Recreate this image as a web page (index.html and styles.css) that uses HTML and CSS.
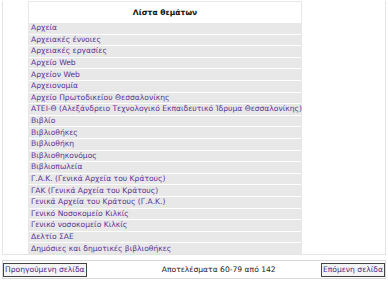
FILE: index.html
```html
<!DOCTYPE html>
<html lang="el">
<head>
  <meta charset="UTF-8" />
  <title>Λίστα θεμάτων</title>
  <link rel="stylesheet" href="styles.css">
</head>
<body>

  <div class="panel">
    <table class="topics">
      <tr><th>Λίστα θεμάτων</th></tr>
      <tr><td><a href="#">Αρχεία</a></td></tr>
      <tr><td><a href="#">Αρχειακές έννοιες</a></td></tr>
      <tr><td><a href="#">Αρχειακές εργασίες</a></td></tr>
      <tr><td><a href="#">Αρχείο Web</a></td></tr>
      <tr><td><a href="#">Αρχείον Web</a></td></tr>
      <tr><td><a href="#">Αρχειονομία</a></td></tr>
      <tr><td><a href="#">Αρχείο Πρωτοδικείου Θεσσαλονίκης</a></td></tr>
      <tr><td><a href="#">ΑΤΕΙ-Θ (Αλεξάνδρειο Τεχνολογικό Εκπαιδευτικό Ίδρυμα Θεσσαλονίκης)</a></td></tr>
      <tr><td><a href="#">Βιβλίο</a></td></tr>
      <tr><td><a href="#">Βιβλιοθήκες</a></td></tr>
      <tr><td><a href="#">Βιβλιοθήκη</a></td></tr>
      <tr><td><a href="#">Βιβλιοθηκονόμος</a></td></tr>
      <tr><td><a href="#">Βιβλιοπωλεία</a></td></tr>
      <tr><td><a href="#">Γ.Α.Κ. (Γενικά Αρχεία του Κράτους)</a></td></tr>
      <tr><td><a href="#">ΓΑΚ (Γενικά Αρχεία του Κράτους)</a></td></tr>
      <tr><td><a href="#">Γενικά Αρχεία του Κράτους (Γ.Α.Κ.)</a></td></tr>
      <tr><td><a href="#">Γενικό Νοσοκομείο Κιλκίς</a></td></tr>
      <tr><td><a href="#">Γενικό νοσοκομείο Κιλκίς</a></td></tr>
      <tr><td><a href="#">Δελτίο ΣΑΕ</a></td></tr>
      <tr><td><a href="#">Δημόσιες και δημοτικές βιβλιοθήκες</a></td></tr>
    </table>
  </div>

  <div class="pager">
    <a class="page-btn" href="#">Προηγούμενη σελίδα</a>
    <span class="results">Αποτελέσματα 60-79 από 142</span>
    <a class="page-btn" href="#">Επόμενη σελίδα</a>
  </div>

</body>
</html>
```

FILE: styles.css
```css
body {
  margin: 0;
  padding: 2px;
  background: white;
  font-family: "DejaVu Sans", Verdana, sans-serif;
  font-size: 7.6px;
  color: #333;
}

.panel {
  border: 1px solid #e4e4e4;
  border-top: 0;
  height: 253px;
  padding-left: 25px;
}

.topics {
  width: 274px;
  table-layout: fixed;
  border-collapse: separate;
  border-spacing: 0 1px;
  border-left: 1px solid #e8e8e8;
  border-right: 1px solid #e8e8e8;
  border-top: 1px solid #e8e8e8;
  margin-top: -1px;
}

.topics th {
  height: 17px;
  background: white;
  font-weight: bold;
  color: #111;
  text-align: center;
}

.topics td {
  height: 10.6px;
  padding: 0 2px;
  background: #e8e8e8;
  line-height: 10px;
  white-space: nowrap;
}

.topics a {
  color: #5a3496;
  text-decoration: none;
}

.pager {
  margin-top: 5px;
  border: 1px solid #d8d8d8;
  height: 17px;
  display: flex;
  align-items: center;
  justify-content: space-between;
}

.page-btn {
  border: 1px solid #444;
  background: #f4f4f4;
  color: #4a2a8a;
  text-decoration: none;
  padding: 1px 1px;
  line-height: 10px;
}

.results {
  color: #222;
  margin-left: 30px;
}
```
